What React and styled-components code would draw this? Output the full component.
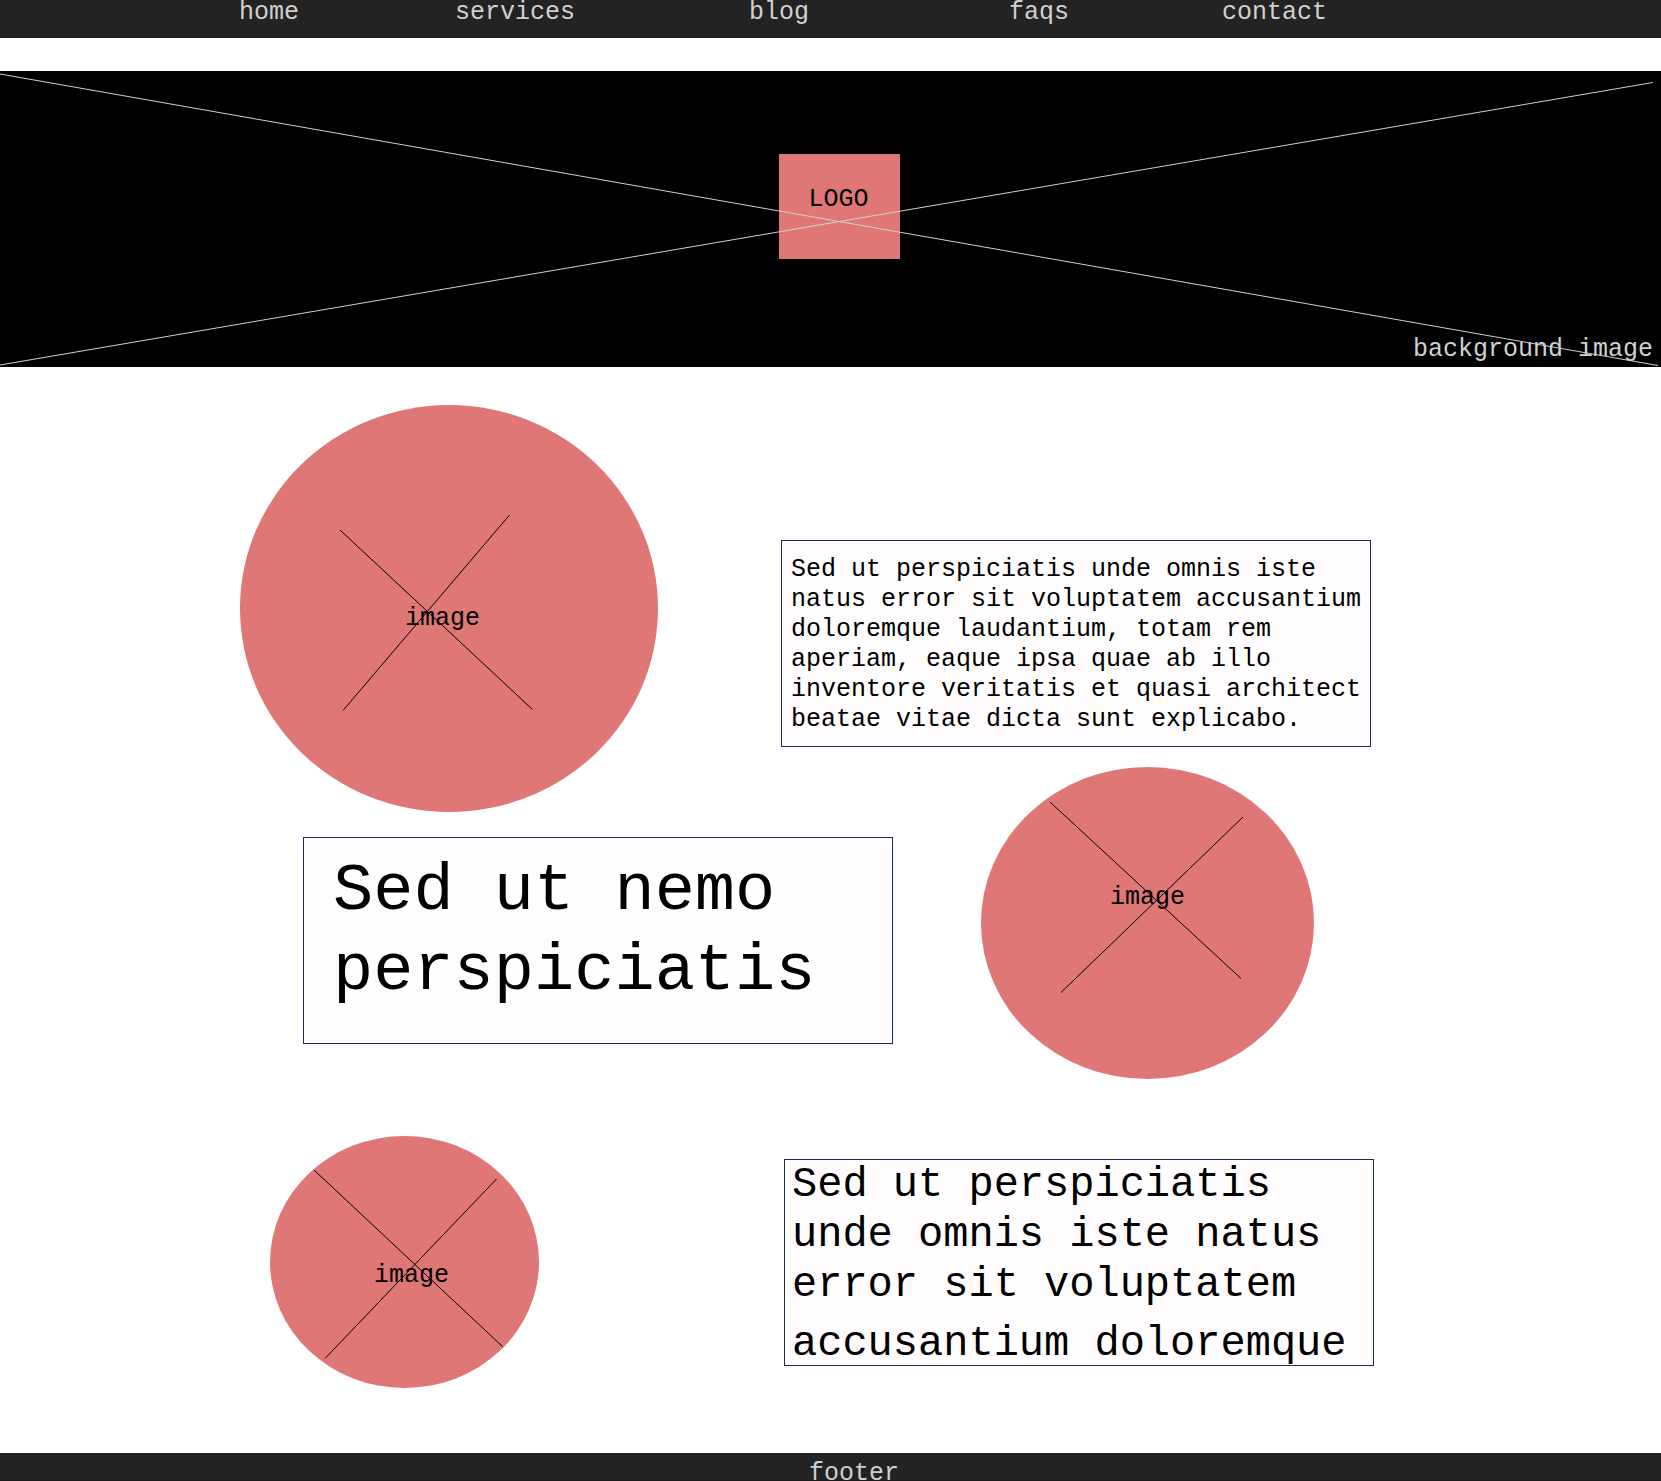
import React from "react";
import styled, { createGlobalStyle } from "styled-components";

const color = {
  bar: "#232323",
  barEdge: "#1b1b1b",
  light: "#d0d0d0",
  coral: "#df7776",
  ink: "#000000",
  panel: "#fffdfe",
  panelEdge: "#1b2d50",
};

const GlobalStyle = createGlobalStyle`
  *, *::before, *::after { box-sizing: border-box; }
  body {
    margin: 0;
    background: #ffffff;
    color: ${color.ink};
    font-family: "Liberation Mono", "Courier New", monospace;
    font-size: 25px;
    line-height: 30px;
  }
`;

const NavBar = styled.nav`
  display: grid;
  grid-template-columns: 239fr 216fr 294fr 260fr 213fr 439fr;
  height: 38px;
  background: ${color.bar};
  border-bottom: 1px solid ${color.barEdge};
`;

const NavLink = styled.a`
  justify-self: start;
  line-height: 26px;
  color: ${color.light};
  text-decoration: none;

  &:first-child {
    grid-column: 2;
  }
`;

const Hero = styled.header`
  position: relative;
  display: flex;
  flex-direction: column;
  justify-content: space-between;
  align-items: center;
  height: 296px;
  margin-top: 33px;
  padding: 83px 8px 2px;
  background: #000000;
`;

const Logo = styled.div`
  width: 121px;
  height: 105px;
  margin-left: 18px;
  padding: 31px 2px 0 0;
  background: ${color.coral};
  text-align: center;
`;

const HeroCaption = styled.p`
  align-self: flex-end;
  margin: 0;
  color: ${color.light};
`;

const Cross = styled.svg`
  position: absolute;
  inset: 0;
  width: 100%;
  height: 100%;
  fill: none;
  stroke: ${(p) => p.$stroke};
  stroke-width: 1;
  pointer-events: none;
`;

const Main = styled.main`
  display: grid;
  grid-template-columns: minmax(0, 240fr) minmax(0, 541fr) minmax(0, 880fr);
  padding-bottom: 65px;
`;

const Column = styled.div`
  grid-column: ${(p) => p.$column};
  display: flex;
  flex-direction: column;
  align-items: flex-start;
  padding-top: ${(p) => p.$top}px;
`;

const Disc = styled.figure`
  position: relative;
  flex: none;
  width: ${(p) => p.$w}px;
  height: ${(p) => p.$h}px;
  margin: ${(p) => p.$gap || 0}px 0 0 ${(p) => p.$indent || 0}px;
  padding: ${(p) => p.$labelTop}px 0 0 ${(p) => p.$labelLeft}px;
  border-radius: 50%;
  background: ${color.coral};
`;

const Panel = styled.p`
  flex: none;
  width: 590px;
  min-height: 207px;
  margin: ${(p) => p.$gap || 0}px 0 0 ${(p) => p.$indent || 0}px;
  padding: ${(p) => p.$pad};
  border: 1px solid ${color.panelEdge};
  background: ${color.panel};
  font-size: ${(p) => p.$size}px;
  line-height: ${(p) => p.$leading}px;
`;

const LastLine = styled.span`
  display: block;
  margin-top: 13px;
  line-height: 42px;
`;

const Footer = styled.footer`
  height: 28px;
  padding: 6px 0 0 47px;
  overflow: hidden;
  background: ${color.bar};
  border-bottom: 1px solid ${color.barEdge};
  color: ${color.light};
  text-align: center;
`;

function ImageDisc({ lines, width, height, ...rest }) {
  return (
    <Disc $w={width} $h={height} {...rest}>
      <figcaption>image</figcaption>
      <Cross $stroke={color.ink} viewBox={`0 0 ${width} ${height}`} aria-hidden="true">
        {lines.map((d) => (
          <path key={d} d={d} />
        ))}
      </Cross>
    </Disc>
  );
}

const links = ["home", "services", "blog", "faqs", "contact"];

export default function App() {
  return (
    <>
      <GlobalStyle />
      <NavBar>
        {links.map((name) => (
          <NavLink key={name} href={`#${name}`}>
            {name}
          </NavLink>
        ))}
      </NavBar>

      <Hero>
        <Logo>LOGO</Logo>
        <HeroCaption>background image</HeroCaption>
        <Cross
          $stroke={color.light}
          viewBox="0 0 1661 296"
          preserveAspectRatio="none"
          aria-hidden="true"
        >
          <path d="M0 3L1658 294.5" />
          <path d="M0 294L1653 11.5" />
        </Cross>
      </Hero>

      <Main>
        <Column $column={2} $top={38}>
          <ImageDisc
            width={418}
            height={407}
            $labelTop={199}
            $labelLeft={165}
            lines={["M100 125L292.5 304.5", "M269.5 110L103 305.5"]}
          />
          <Panel $gap={25} $indent={63} $pad="13px 29px" $size={67} $leading={80}>
            Sed ut nemo perspiciatis
          </Panel>
          <ImageDisc
            width={269}
            height={252}
            $gap={92}
            $indent={30}
            $labelTop={125}
            $labelLeft={104}
            lines={["M44 34L232.5 210.5", "M226.5 43L55 222.5"]}
          />
        </Column>

        <Column $column={3} $top={173}>
          <Panel $pad="14px 8px 11px 9px" $size={25} $leading={30}>
            Sed ut perspiciatis unde omnis iste natus error sit voluptatem
            accusantium doloremque laudantium, totam rem aperiam, eaque ipsa
            quae ab illo inventore veritatis et quasi architect beatae vitae
            dicta sunt explicabo.
          </Panel>
          <ImageDisc
            width={333}
            height={312}
            $gap={20}
            $indent={200}
            $labelTop={116}
            $labelLeft={129}
            lines={["M69 35L260 211.5", "M262 50L80 225.5"]}
          />
          <Panel $gap={80} $indent={3} $pad="0 7px" $size={42} $leading={50}>
            Sed ut perspiciatis unde omnis iste natus error sit voluptatem
            <LastLine>accusantium doloremque</LastLine>
          </Panel>
        </Column>
      </Main>

      <Footer>footer</Footer>
    </>
  );
}
